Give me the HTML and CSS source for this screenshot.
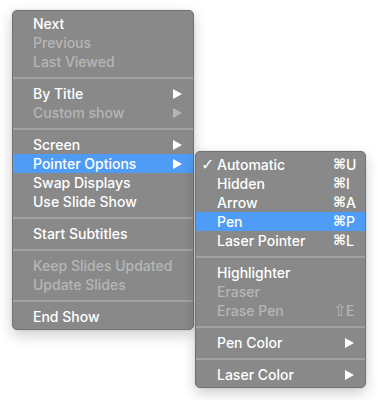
FILE: index.html
```html
<!DOCTYPE html>
<html>
<head>
<meta charset="utf-8">
<link rel="stylesheet" href="styles.css">
</head>
<body>
<div class="stage">
  <div class="menu main">
    <div class="item">Next</div>
    <div class="item off">Previous</div>
    <div class="item off">Last Viewed</div>
    <div class="sep"></div>
    <div class="item"><span class="label">By Title</span><svg class="arrow" viewBox="0 0 9 10"><polygon points="0,0 9,5 0,10"/></svg></div>
    <div class="item off"><span class="label">Custom show</span><svg class="arrow" viewBox="0 0 9 10"><polygon points="0,0 9,5 0,10"/></svg></div>
    <div class="sep"></div>
    <div class="item"><span class="label">Screen</span><svg class="arrow" viewBox="0 0 9 10"><polygon points="0,0 9,5 0,10"/></svg></div>
    <div class="item sel"><span class="label">Pointer Options</span><svg class="arrow" viewBox="0 0 9 10"><polygon points="0,0 9,5 0,10"/></svg></div>
    <div class="item">Swap Displays</div>
    <div class="item">Use Slide Show</div>
    <div class="sep"></div>
    <div class="item">Start Subtitles</div>
    <div class="sep"></div>
    <div class="item off">Keep Slides Updated</div>
    <div class="item off">Update Slides</div>
    <div class="sep"></div>
    <div class="item">End Show</div>

    <div class="menu sub">
      <div class="item"><span class="check">✓</span><span class="label">Automatic</span><span class="key"><span class="mod">⌘</span>U</span></div>
      <div class="item"><span class="label">Hidden</span><span class="key"><span class="mod">⌘</span>I</span></div>
      <div class="item"><span class="label">Arrow</span><span class="key"><span class="mod">⌘</span>A</span></div>
      <div class="item sel"><span class="label">Pen</span><span class="key"><span class="mod">⌘</span>P</span></div>
      <div class="item"><span class="label">Laser Pointer</span><span class="key"><span class="mod">⌘</span>L</span></div>
      <div class="sep"></div>
      <div class="item">Highlighter</div>
      <div class="item off">Eraser</div>
      <div class="item off"><span class="label">Erase Pen</span><span class="key"><span class="mod shift">⇧</span>E</span></div>
      <div class="sep"></div>
      <div class="item"><span class="label">Pen Color</span><svg class="arrow sarrow" viewBox="0 0 9 10"><polygon points="0,0 9,5 0,10"/></svg></div>
      <div class="sep"></div>
      <div class="item"><span class="label">Laser Color</span><svg class="arrow sarrow" viewBox="0 0 9 10"><polygon points="0,0 9,5 0,10"/></svg></div>
    </div>
  </div>
</div>
</body>
</html>
```

FILE: styles.css
```css
html, body {
  margin: 0;
  padding: 0;
  background: #ffffff;
}

body {
  font-family: "Inter", "Liberation Sans", "DejaVu Sans", sans-serif;
  font-size: 14px;
  font-weight: 500;
  color: #ffffff;
  width: 378px;
  height: 400px;
  overflow: hidden;
}

.stage {
  padding: 10px 0 0 12px;
}

.menu {
  box-sizing: border-box;
  background: #898989;
  border: 1px solid #727272;
  border-radius: 5px;
  padding: 3px 0;
  box-shadow: 0 5px 14px rgba(0, 0, 0, 0.2), 0 0 2px rgba(0, 0, 0, 0.12);
}

.main {
  position: relative;
  width: 182px;
}

.sub {
  position: absolute;
  left: 182px;
  top: 140px;
  width: 171px;
}

.item {
  position: relative;
  display: flex;
  align-items: center;
  height: 19px;
  line-height: 19px;
  padding: 0 10px 0 20px;
  white-space: nowrap;
}

.sub .item {
  padding: 0 8px 0 21px;
}

.label {
  flex: 1;
}

.off {
  color: #b6b6b6;
}

.sel {
  background: #4f9cf6;
}

.arrow {
  width: 9px;
  height: 10px;
  fill: currentColor;
  margin-right: 1px;
}

.sarrow {
  margin-right: 3px;
}

.key {
  width: 24px;
  display: flex;
}

.mod {
  width: 13px;
  font-family: "DejaVu Sans", sans-serif;
  font-size: 14px;
  font-weight: bold;
}

.shift {
  font-size: 16px;
  font-weight: normal;
}

.check {
  position: absolute;
  left: 5px;
  top: 0;
  font-family: "DejaVu Sans", sans-serif;
  font-size: 16px;
  font-weight: bold;
}

.sep {
  height: 2px;
  margin: 6px 0 5px;
  background: #a2a2a2;
}
```
